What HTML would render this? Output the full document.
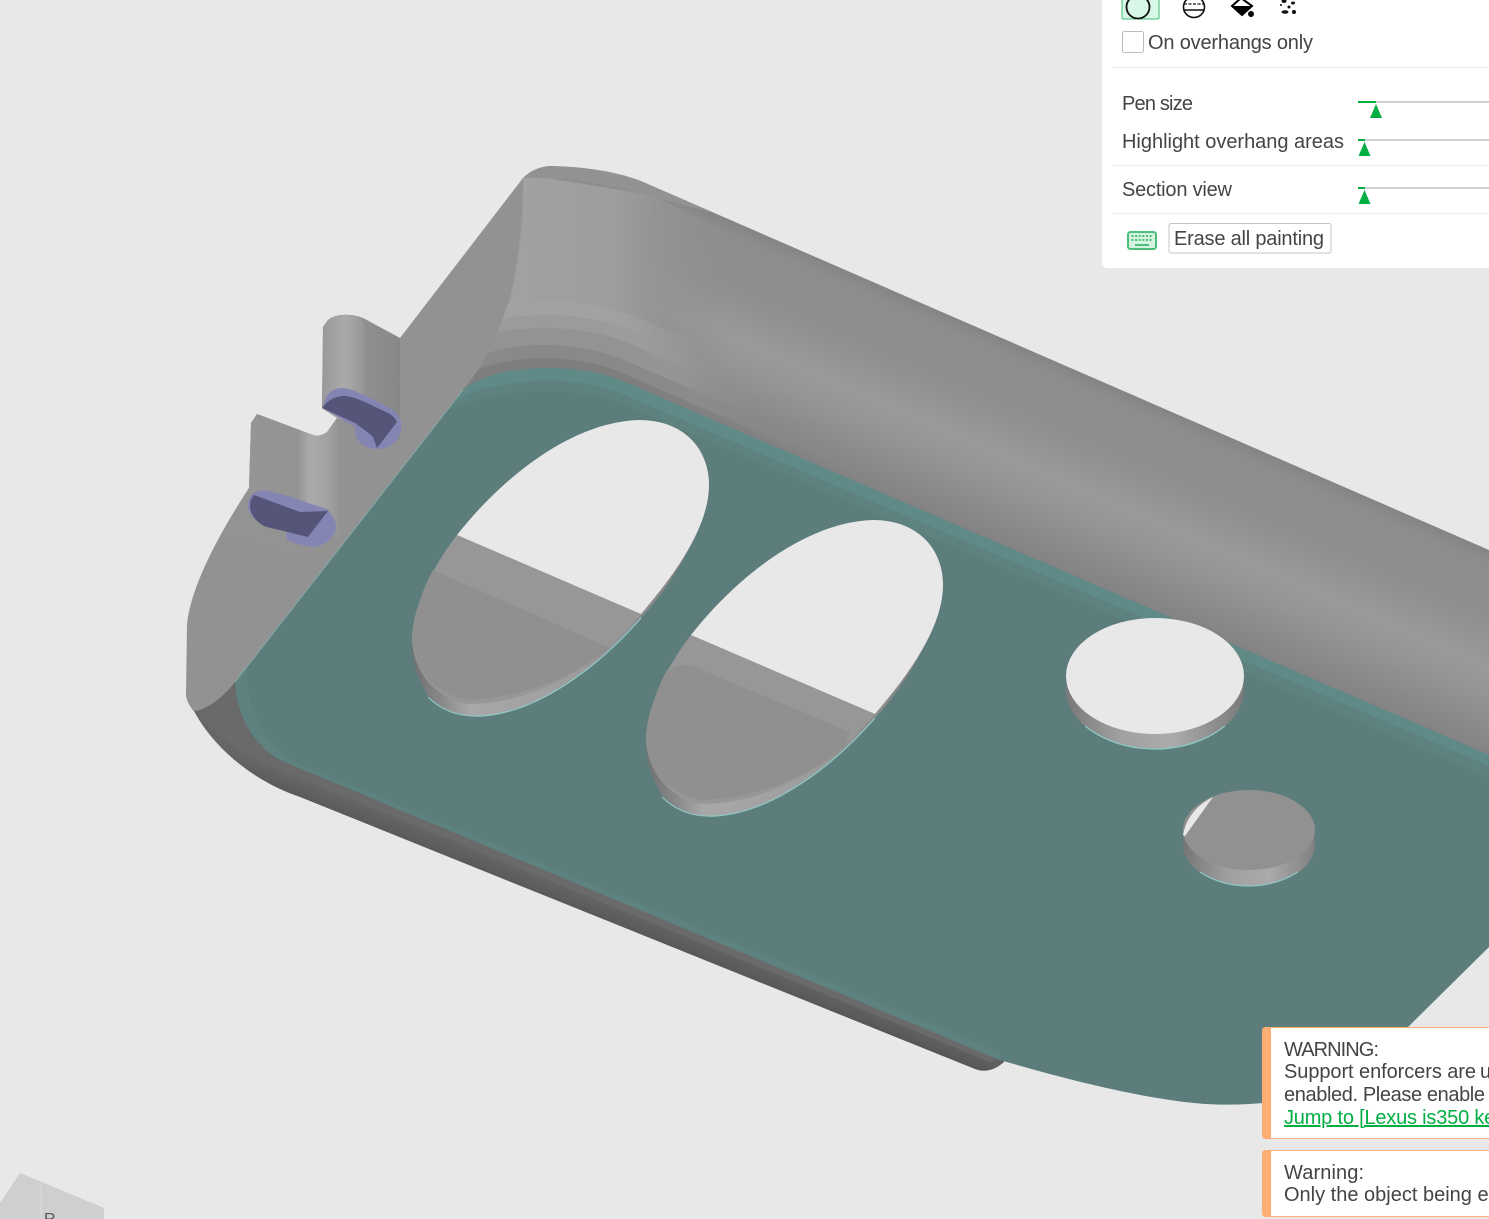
<!DOCTYPE html>
<html><head><meta charset="utf-8"><style>
html,body{margin:0;padding:0;background:#e8e8e8;width:1489px;height:1219px;overflow:hidden}
svg{display:block;position:absolute;left:0;top:0}
text{font-family:"Liberation Sans","Noto Sans CJK SC",sans-serif;font-size:20px;fill:#444}
</style></head><body>
<svg width="1489" height="1219" viewBox="0 0 1489 1219" xmlns="http://www.w3.org/2000/svg">
<defs>
<linearGradient id="wall" gradientUnits="userSpaceOnUse" x1="1000" y1="338" x2="915" y2="533">
<stop offset="0" stop-color="#858585"/><stop offset=".06" stop-color="#8d8d8d"/><stop offset=".3" stop-color="#8f8f8f"/><stop offset=".5" stop-color="#9a9a9a"/><stop offset=".62" stop-color="#959595"/><stop offset=".78" stop-color="#8a8a8a"/><stop offset=".9" stop-color="#828282"/><stop offset="1" stop-color="#7a7a7a"/>
</linearGradient>
<linearGradient id="corner" gradientUnits="userSpaceOnUse" x1="523" y1="0" x2="730" y2="0">
<stop offset="0" stop-color="#a1a1a1"/><stop offset=".45" stop-color="#9d9d9d"/><stop offset=".62" stop-color="#959595"/><stop offset="1" stop-color="#8f8f8f" stop-opacity="0"/>
</linearGradient>
<linearGradient id="f1" gradientUnits="userSpaceOnUse" x1="590" y1="0" x2="700" y2="0"><stop offset="0" stop-color="#a2a2a2"/><stop offset="1" stop-color="#a2a2a2" stop-opacity="0"/></linearGradient>
<linearGradient id="f2" gradientUnits="userSpaceOnUse" x1="600" y1="0" x2="720" y2="0"><stop offset="0" stop-color="#9b9b9b"/><stop offset="1" stop-color="#9b9b9b" stop-opacity="0"/></linearGradient>
<linearGradient id="f3" gradientUnits="userSpaceOnUse" x1="620" y1="0" x2="760" y2="0"><stop offset="0" stop-color="#939393"/><stop offset="1" stop-color="#939393" stop-opacity="0"/></linearGradient>
<linearGradient id="f4" gradientUnits="userSpaceOnUse" x1="640" y1="0" x2="860" y2="0"><stop offset="0" stop-color="#898989"/><stop offset="1" stop-color="#898989" stop-opacity="0"/></linearGradient>
<linearGradient id="f5" gradientUnits="userSpaceOnUse" x1="640" y1="0" x2="860" y2="0"><stop offset="0" stop-color="#7e7e7e"/><stop offset="1" stop-color="#7e7e7e" stop-opacity="0"/></linearGradient>
<linearGradient id="tab1" gradientUnits="userSpaceOnUse" x1="322" y1="0" x2="400" y2="0">
<stop offset="0" stop-color="#989898"/><stop offset=".28" stop-color="#aaa"/><stop offset=".5" stop-color="#9a9a9a"/><stop offset=".56" stop-color="#8f8f8f"/><stop offset="1" stop-color="#888"/>
</linearGradient>
<linearGradient id="tab2" gradientUnits="userSpaceOnUse" x1="250" y1="0" x2="345" y2="0">
<stop offset="0" stop-color="#959595"/><stop offset=".5" stop-color="#939393"/><stop offset=".62" stop-color="#aaa"/><stop offset=".82" stop-color="#a2a2a2"/><stop offset=".95" stop-color="#929292"/>
</linearGradient>
<linearGradient id="rim" gradientUnits="userSpaceOnUse" x1="412" y1="0" x2="700" y2="0">
<stop offset="0" stop-color="#707070"/><stop offset=".1" stop-color="#888"/><stop offset=".2" stop-color="#a8a8a8"/><stop offset=".5" stop-color="#a0a0a0"/><stop offset="1" stop-color="#808080"/>
</linearGradient>
<linearGradient id="rim3" gradientUnits="userSpaceOnUse" x1="1066" y1="0" x2="1244" y2="0">
<stop offset="0" stop-color="#787878"/><stop offset=".3" stop-color="#a0a0a0"/><stop offset=".6" stop-color="#ababab"/><stop offset="1" stop-color="#7a7a7a"/>
</linearGradient>
<linearGradient id="rim4" gradientUnits="userSpaceOnUse" x1="1183" y1="0" x2="1315" y2="0">
<stop offset="0" stop-color="#767676"/><stop offset=".35" stop-color="#a0a0a0"/><stop offset=".65" stop-color="#aaa"/><stop offset="1" stop-color="#808080"/>
</linearGradient>
<linearGradient id="dark" gradientUnits="userSpaceOnUse" x1="620" y1="905" x2="607" y2="938">
<stop offset="0" stop-color="#666"/><stop offset=".5" stop-color="#5a5a5a"/><stop offset="1" stop-color="#484848"/>
</linearGradient>
<clipPath id="wallclip"><path d="M523,178C530,171 540,166 552,166C590,167 625,173 650,185L1489,550V770L620,385C575,362 500,362 463,390L473,377C495,345 524,290 523,178Z"/></clipPath>
<g id="hole">
<path d="M412,645C412,655 415,675 428,695C440,712 465,717 482,716C540,712 600,665 641,618C680,575 705,525 709,485L706,500C695,545 670,580 641,614L457,535C430,570 412,610 412,645Z" fill="url(#rim)"/>
<path d="M412,640C412,610 430,570 457,535L641,614C625,632 615,642 605,651C580,672 530,703 470,704C445,702 414,680 412,640Z" fill="#979797"/>
<path d="M433,570L610,648C580,672 530,697 470,700C445,697 414,680 412,640C414,615 422,590 433,570Z" fill="#909090"/>
<path d="M457,535C500,480 570,422 639,420C685,420 709,450 709,485C709,530 670,580 641,614Z" fill="#e8e8e8"/>
<path d="M428,697C445,714 465,717 482,716C540,712 600,665 641,618" fill="none" stroke="#8ec9c6" stroke-width="1.2"/>
</g>
</defs>

<rect width="1489" height="1219" fill="#e8e8e8"/>

<!-- underside dark rim -->
<path d="M186,695C188,702 190,707 194,711C212,745 250,780 300,797L975,1069C985,1073 995,1070 1004,1062L1004,1040L235,670Z" fill="url(#dark)"/>
<path d="M196,711L235,682C238,715 255,745 280,760L1000,1058L990,1062L300,778C260,762 220,745 196,711Z" fill="#6a6a6a"/>

<!-- left face -->
<path d="M523,178L400,338L398,337L363,318C350,313 335,314 328,320L323,327L322,408L337,418L327,432C322,436 316,436 313,435L257,414L251,423L249,488C215,540 190,590 187,625L186,695C187,703 191,709 196,711C210,708 225,695 235,682L473,377C495,345 524,290 523,178Z" fill="#929292"/>

<!-- tabs -->
<path d="M400,338L398,337L363,318C350,313 335,314 328,320L323,327L322,408L337,418L400,440Z" fill="url(#tab1)"/>
<path d="M337,418L327,432C322,436 316,436 313,435L257,414L251,423L249,488L250,510L345,540L400,440Z" fill="url(#tab2)"/>
<path d="M249,488C240,503 232,515 222,535L300,560L340,530L249,490Z" fill="#939393"/>

<!-- blue painted -->
<path d="M323,408C324,398 330,388 342,388C352,388 375,400 393,410C400,415 403,425 401,432C398,442 388,449 378,449C368,449 358,444 356,436L355,427Z" fill="#8585b3"/>
<path d="M322,408C328,400 335,396 345,396C355,396 375,407 388,413C392,415 395,418 397,422L377,448L373,437C368,432 360,427 355,423Z" fill="#55557a"/>
<path d="M248,507C248,498 252,491 262,490C280,492 310,504 327,509C333,515 337,522 336,528C334,538 325,546 313,547C305,546 295,543 288,541C286,536 286,532 287,530L262,524C254,520 249,514 248,507Z" fill="#8585b3"/>
<path d="M250,507C250,500 252,497 254,495L300,512L328,511L308,537L267,527C258,524 251,516 250,507Z" fill="#55557a"/>

<!-- wall -->
<path d="M523,178C530,171 540,166 552,166C590,167 625,173 650,185L1489,550V770L620,385C575,362 500,362 463,390L473,377C495,345 524,290 523,178Z" fill="url(#wall)"/>
<g clip-path="url(#wallclip)">
<path d="M523,178L535,176L650,195L770,250V420L480,370L500,330C515,290 525,240 523,178Z" fill="url(#corner)"/>
<path d="M523,178C530,171 540,166 552,166C590,167 625,173 650,185L720,215L650,196C610,184 570,177 523,178Z" fill="#929292"/>
<g fill="none">
<path d="M455,390C500,358 575,358 625,382L870,488" stroke="url(#f1)" stroke-width="128"/>
<path d="M455,390C500,358 575,358 625,382L870,488" stroke="url(#f2)" stroke-width="100"/>
<path d="M455,390C500,358 575,358 625,382L870,488" stroke="url(#f3)" stroke-width="74"/>
<path d="M455,390C500,358 575,358 625,382L870,488" stroke="url(#f4)" stroke-width="40"/>
<path d="M455,390C500,358 575,358 625,382L870,488" stroke="url(#f5)" stroke-width="14"/>
</g>
</g>

<!-- teal plate -->
<path d="M463,390C490,365 575,360 625,382L1489,755V947L1408,1027L1300,1098C1270,1103 1240,1106 1205,1104C1150,1100 1075,1082 1000,1060L280,760C255,745 238,720 235,682Z" fill="#5c7d7b"/>
<path d="M463,390C490,365 575,360 625,382L1489,755V778L620,403C575,385 495,388 448,410Z" fill="#5d8280"/>
<path d="M463,390C490,365 575,360 625,382L1489,755V766L620,393C575,374 495,377 455,401Z" fill="#5f8a88"/>
<path d="M235,682C238,720 255,745 280,760L1000,1060L1000,1052L295,762C268,745 248,715 246,668Z" fill="#5d8280"/>
<path d="M235,682L463,390" stroke="#83aaa7" stroke-width="1" fill="none"/>

<!-- holes -->
<use href="#hole"/>
<use href="#hole" transform="translate(234,100)"/>
<path d="M667,672C675,665 685,663 695,667L850,732L844,748Z" fill="#909090"/>

<ellipse cx="1155" cy="690" rx="89" ry="58.5" fill="url(#rim3)"/>
<path d="M1085,726C1105,742 1130,749 1155,749C1180,749 1205,742 1225,726" fill="none" stroke="#8ec9c6" stroke-width="1.2"/>
<ellipse cx="1155" cy="676" rx="89" ry="58" fill="#e8e8e8"/>

<ellipse cx="1249" cy="845" rx="66" ry="41" fill="url(#rim4)"/>
<path d="M1200,872C1215,882 1232,886 1249,886C1268,886 1285,880 1298,872" fill="none" stroke="#8ec9c6" stroke-width="1.2"/>
<ellipse cx="1249" cy="830" rx="66" ry="40" fill="#919191"/>
<path d="M1213,797C1197,805 1186,818 1183,835L1185,836Z" fill="#e8e8e8"/>

<!-- view cube -->
<path d="M0,1203L20,1173L104,1208V1219H0Z" fill="#cfcfcf"/>
<path d="M41,1183V1219" stroke="#d6d6d6" stroke-width="2"/>
<text x="44" y="1224" style="font-size:16px;fill:#555">R</text>

<!-- top panel -->
<path d="M1102,0H1489V268H1108Q1102,268 1102,262Z" fill="#fff"/>
<path d="M1122,-2V18Q1122,19 1123,19H1158Q1159,19 1159,18V-2Z" fill="#d9f7e6" stroke="#3fbb72" stroke-width="1"/>
<circle cx="1138" cy="7" r="11.500" fill="none" stroke="#111" stroke-width="1.800"/>
<circle cx="1194" cy="7" r="10.500" fill="none" stroke="#111" stroke-width="1.600"/>
<path d="M1184,4H1204" stroke="#111" stroke-width="1.200" stroke-dasharray="3 1.500" fill="none"/>
<path d="M1184,10H1204" stroke="#111" stroke-width="1.400" fill="none"/>
<path d="M1232,6L1241,-2L1252,6L1242,15Z" fill="#fff" stroke="#000" stroke-width="2"/>
<path d="M1231,6H1253L1242,16Z" fill="#000"/>
<circle cx="1251" cy="14" r="3" fill="#000"/>
<g fill="#111">
<ellipse cx="1284" cy="1" rx="2.500" ry="2"/><ellipse cx="1293" cy="3" rx="2" ry="1.500"/><ellipse cx="1289" cy="7" rx="1.500" ry="1.500"/><ellipse cx="1285" cy="12" rx="3.500" ry="1.800"/><ellipse cx="1294" cy="12" rx="2" ry="2"/><ellipse cx="1281" cy="5" rx="1" ry="1"/>
</g>
<rect x="1122.500" y="31.500" width="21" height="21" rx="2" fill="#fff" stroke="#bdbdbd"/>
<text x="1148" y="49" textLength="165" lengthAdjust="spacing">On overhangs only</text>
<rect x="1112" y="67" width="377" height="1" fill="#eeeeee"/>

<text x="1122" y="110" textLength="71" lengthAdjust="spacing">Pen size</text>
<rect x="1376" y="101" width="113" height="2" fill="#d0d0d0"/>
<rect x="1358" y="101" width="18" height="2" fill="#00ae42"/>
<path d="M1376,104L1382,118H1370Z" fill="#00ae42"/>

<text x="1122" y="148" textLength="222" lengthAdjust="spacing">Highlight overhang areas</text>
<rect x="1365" y="139" width="124" height="2" fill="#d0d0d0"/>
<rect x="1358" y="139" width="7" height="2" fill="#00ae42"/>
<path d="M1364.500,142L1370.500,156H1358.500Z" fill="#00ae42"/>
<rect x="1112" y="165" width="377" height="1" fill="#eeeeee"/>

<text x="1122" y="196" textLength="110" lengthAdjust="spacing">Section view</text>
<rect x="1365" y="187" width="124" height="2" fill="#d0d0d0"/>
<rect x="1358" y="187" width="7" height="2" fill="#00ae42"/>
<path d="M1364.500,190L1370.500,204H1358.500Z" fill="#00ae42"/>
<rect x="1112" y="213" width="377" height="1" fill="#eeeeee"/>

<rect x="1128" y="232" width="28" height="17" rx="2.500" fill="#d6f3e1" stroke="#4cbf7a" stroke-width="2"/>
<path d="M1131.500,236H1152M1131.500,240H1152" stroke="#4cbf7a" stroke-width="2" stroke-dasharray="2 1.600" fill="none"/>
<path d="M1135,245H1149" stroke="#4cbf7a" stroke-width="2" fill="none"/>
<rect x="1169" y="223.500" width="162" height="29.500" rx="2" fill="#fff" stroke="#c4c4c4"/>
<text x="1174" y="245" textLength="150" lengthAdjust="spacing">Erase all painting</text>

<!-- warnings -->
<rect x="1262.500" y="1027.500" width="240" height="111" rx="4" fill="#fff" stroke="#ffb27a"/>
<path d="M1271,1027H1266Q1262,1027 1262,1031V1135Q1262,1139 1266,1139H1271Z" fill="#ffae73"/>
<text x="1284" y="1056" textLength="95" lengthAdjust="spacing">WARNING:</text>
<text x="1284" y="1078" textLength="192" lengthAdjust="spacing">Support enforcers are</text>
<text x="1480" y="1078">used but support is not</text>
<text x="1284" y="1101" textLength="201" lengthAdjust="spacing">enabled. Please enable</text>
<text x="1284" y="1124" style="fill:#00ae42;text-decoration:underline;letter-spacing:-.2px">Jump to [Lexus is350 key fob]</text>
<rect x="1262.500" y="1150.500" width="240" height="66" rx="4" fill="#fff" stroke="#ffb27a"/>
<path d="M1271,1150H1266Q1262,1150 1262,1154V1213Q1262,1217 1266,1217H1271Z" fill="#ffae73"/>
<text x="1284" y="1179" textLength="80" lengthAdjust="spacing">Warning:</text>
<text x="1284" y="1201">Only the object being edited is visible.</text>
</svg>
</body></html>
